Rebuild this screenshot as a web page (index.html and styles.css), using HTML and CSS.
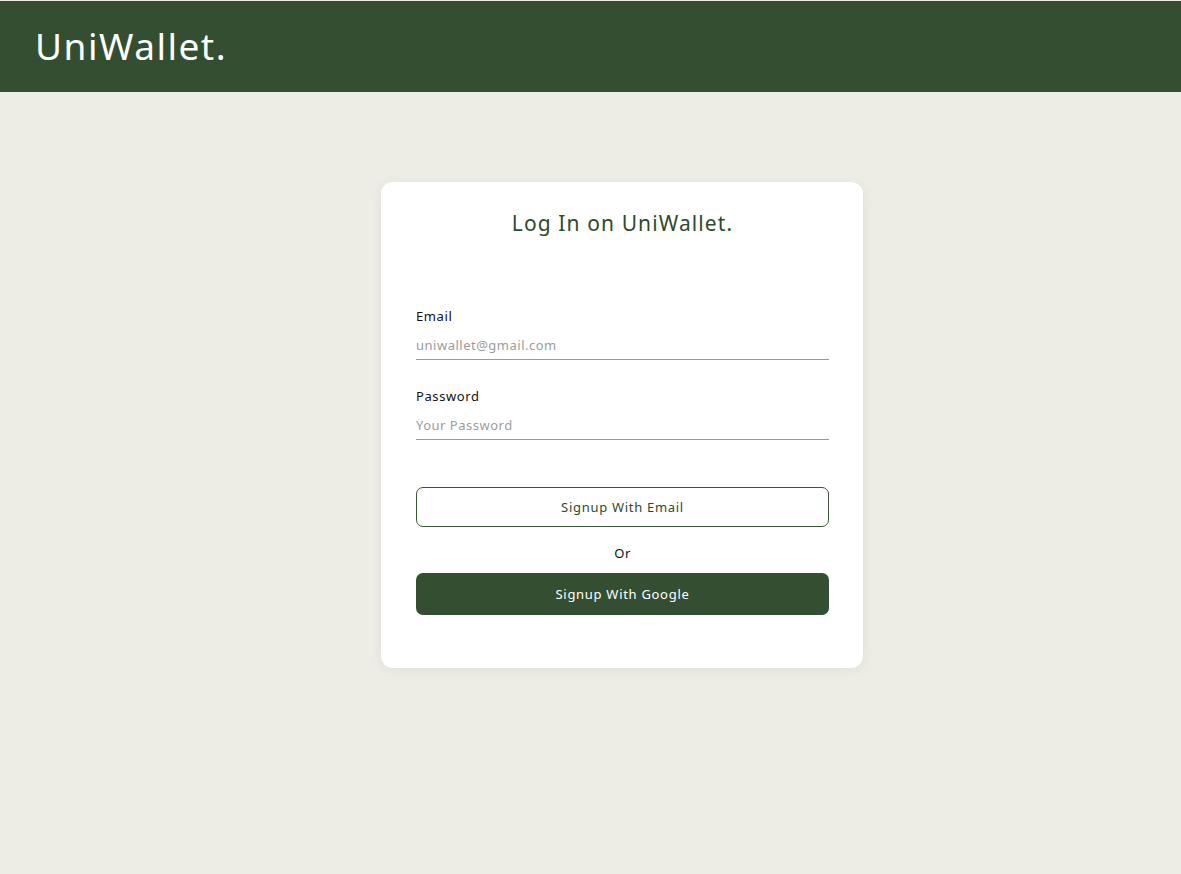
FILE: index.html
```html
<!DOCTYPE html>
<html lang="en">
<head>
<meta charset="utf-8">
<title>UniWallet</title>
<link rel="stylesheet" href="styles.css">
</head>
<body>
<header class="topbar">
  <div class="brand">UniWallet.</div>
</header>
<main class="main">
  <section class="card">
    <h1 class="card-title">Log In on UniWallet.</h1>
    <form class="form">
      <label class="field">
        <span class="field-label">Email</span>
        <input class="field-input" type="email" placeholder="uniwallet@gmail.com">
      </label>
      <label class="field">
        <span class="field-label">Password</span>
        <input class="field-input" type="password" placeholder="Your Password">
      </label>
      <div class="actions">
        <button type="button" class="btn btn-outline">Signup With Email</button>
        <div class="or">Or</div>
        <button type="button" class="btn btn-solid">Signup With Google</button>
      </div>
    </form>
  </section>
</main>
</body>
</html>
```

FILE: styles.css
```css
* { box-sizing: border-box; }
html, body { margin: 0; padding: 0; }
body {
  background: #edede5;
  font-family: "Noto Sans", "Open Sans", sans-serif;
  min-height: 874px;
}
.topbar {
  margin-top: 1px;
  height: 91px;
  background: #344e31;
  display: flex;
  align-items: center;
  padding-left: 35px;
}
.brand {
  color: #ffffff;
  font-size: 37px;
  font-weight: 400;
  letter-spacing: 1.5px;
  line-height: 1;
  margin-top: -2px;
}
.main {
  display: flex;
  justify-content: center;
  padding-top: 90px;
  padding-left: 63px;
}
.card {
  width: 482px;
  height: 486px;
  background: #ffffff;
  border-radius: 12px;
  box-shadow: 0 2px 12px rgba(0, 0, 0, 0.06);
  padding: 26px 34px 0 35px;
}
.card-title {
  margin: 0;
  text-align: center;
  font-size: 21px;
  font-weight: 400;
  color: #2f4a2b;
  line-height: 30px;
  letter-spacing: 1.1px;
}
.form {
  margin-top: 70px;
  display: flex;
  flex-direction: column;
}
.field {
  display: flex;
  flex-direction: column;
  margin-bottom: 28px;
}
.field-label {
  font-size: 13px;
  color: #111;
  line-height: 16px;
  letter-spacing: 0.6px;
}
.field-input {
  margin-top: 13px;
  border: 0;
  border-bottom: 1px solid #9a9a9a;
  outline: none;
  padding: 0 0 6px 0;
  font-family: inherit;
  font-size: 13px;
  line-height: 16px;
  color: #333;
  background: transparent;
  letter-spacing: 0.5px;
}
.field-input::placeholder { color: #9c9c9c; }
.actions {
  margin-top: 19px;
  display: flex;
  flex-direction: column;
  align-items: stretch;
}
.btn {
  font-family: inherit;
  font-size: 13px;
  border-radius: 7px;
  cursor: pointer;
  letter-spacing: 0.7px;
}
.btn-outline {
  height: 40px;
  background: #fff;
  border: 1px solid #3a5635;
  color: #2f4a2b;
}
.or {
  text-align: center;
  font-size: 13px;
  color: #111;
  margin: 18px 0 12px;
  line-height: 16px;
  letter-spacing: 0.6px;
}
.btn-solid {
  height: 42px;
  background: #344e31;
  border: 0;
  color: #ffffff;
}
```
